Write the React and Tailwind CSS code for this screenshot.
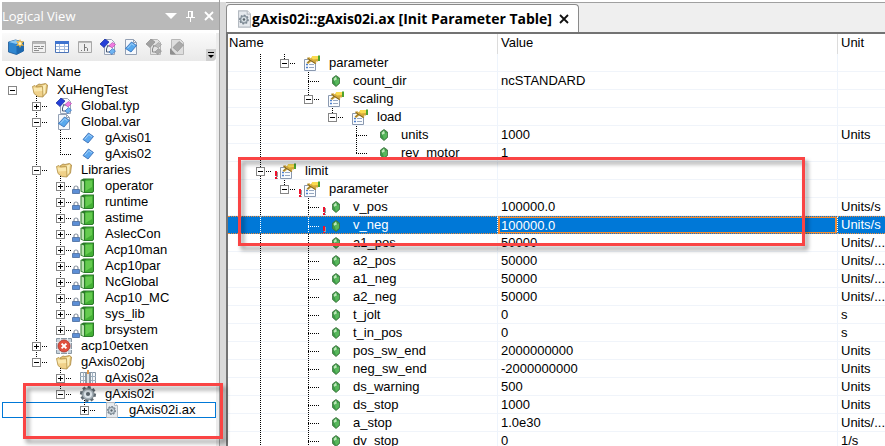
import React from "react";

const TREE_ROWS = [
  { depth: 0, name: "XuHengTest", icon: "folder", open: true },
  { depth: 1, name: "Global.typ", icon: "types", open: false },
  { depth: 1, name: "Global.var", icon: "vars", open: true },
  { depth: 2, name: "gAxis01", icon: "tag" },
  { depth: 2, name: "gAxis02", icon: "tag" },
  { depth: 1, name: "Libraries", icon: "folder", open: true },
  { depth: 2, name: "operator", icon: "book", open: false, badge: "lock" },
  { depth: 2, name: "runtime", icon: "book", open: false, badge: "lock" },
  { depth: 2, name: "astime", icon: "book", open: false, badge: "lock" },
  { depth: 2, name: "AslecCon", icon: "book", open: false, badge: "lock" },
  { depth: 2, name: "Acp10man", icon: "book", open: false, badge: "lock" },
  { depth: 2, name: "Acp10par", icon: "book", open: false, badge: "lock" },
  { depth: 2, name: "NcGlobal", icon: "book", open: false, badge: "lock" },
  { depth: 2, name: "Acp10_MC", icon: "book", open: false, badge: "lock" },
  { depth: 2, name: "sys_lib", icon: "book", open: false, badge: "lock" },
  { depth: 2, name: "brsystem", icon: "book", open: false, badge: "lock" },
  { depth: 1, name: "acp10etxen", icon: "error", open: false },
  { depth: 1, name: "gAxis02obj", icon: "folder", open: true },
  { depth: 2, name: "gAxis02a", icon: "axis", open: false },
  { depth: 2, name: "gAxis02i", icon: "gear", open: true },
  { depth: 3, name: "gAxis02i.ax", icon: "gearPage", open: false, selected: true },
];

const PARAM_ROWS = [
  { depth: 1, name: "parameter", icon: "props", open: true },
  { depth: 2, name: "count_dir", icon: "gem", value: "ncSTANDARD" },
  { depth: 2, name: "scaling", icon: "props", open: true },
  { depth: 3, name: "load", icon: "props", open: true },
  { depth: 4, name: "units", icon: "gem", value: "1000", unit: "Units" },
  { depth: 4, name: "rev_motor", icon: "gem", value: "1" },
  { depth: 0, name: "limit", icon: "props", open: true, badge: "alert" },
  { depth: 1, name: "parameter", icon: "props", open: true, badge: "alert" },
  { depth: 2, name: "v_pos", icon: "gem", value: "100000.0", unit: "Units/s", badge: "alert" },
  { depth: 2, name: "v_neg", icon: "gem", value: "100000.0", unit: "Units/s", badge: "alert", selected: true },
  { depth: 2, name: "a1_pos", icon: "gem", value: "50000", unit: "Units/..." },
  { depth: 2, name: "a2_pos", icon: "gem", value: "50000", unit: "Units/..." },
  { depth: 2, name: "a1_neg", icon: "gem", value: "50000", unit: "Units/..." },
  { depth: 2, name: "a2_neg", icon: "gem", value: "50000", unit: "Units/..." },
  { depth: 2, name: "t_jolt", icon: "gem", value: "0", unit: "s" },
  { depth: 2, name: "t_in_pos", icon: "gem", value: "0", unit: "s" },
  { depth: 2, name: "pos_sw_end", icon: "gem", value: "2000000000", unit: "Units" },
  { depth: 2, name: "neg_sw_end", icon: "gem", value: "-2000000000", unit: "Units" },
  { depth: 2, name: "ds_warning", icon: "gem", value: "500", unit: "Units" },
  { depth: 2, name: "ds_stop", icon: "gem", value: "1000", unit: "Units" },
  { depth: 2, name: "a_stop", icon: "gem", value: "1.0e30", unit: "Units/..." },
  { depth: 2, name: "dv_stop", icon: "gem", value: "0", unit: "1/s" },
];

// True when the branch line of `level` goes on below row `index`.
function continues(rows, index, level, tail) {
  for (let i = index + 1; i < rows.length; i++) {
    if (rows[i].depth < level) return false;
    if (rows[i].depth === level) return true;
  }
  return tail.includes(level);
}

function Gear({ cx, cy, r, dark = "#5f6971" }) {
  return (
    <g transform={`translate(${cx} ${cy})`}>
      {[0, 45, 90, 135].map((a) => (
        <rect key={a} x={-r} y={-r * 0.2} width={r * 2} height={r * 0.4} fill={dark} transform={`rotate(${a + 10})`} />
      ))}
      <circle r={r * 0.76} fill="#a3aeb6" stroke={dark} strokeWidth=".6" />
      <circle r={r * 0.5} fill="#dde5ea" />
      <circle r={r * 0.26} fill="#59636b" />
    </g>
  );
}

function Page() {
  return <path d="M2.5 .5h8l3 3v12h-11z M10.5 .5v3h3" fill="#f5f8fc" stroke="#93a0b4" />;
}

function TypeShapes({ gray }) {
  return (
    <g>
      <path d="M4.5 .5h7l3 3v12h-10z" fill={gray ? "#e4e4e4" : "#f5f8fc"} stroke={gray ? "#b5b5b5" : "#9aa5b8"} />
      <path d="M8 6l-1.5 4v3h4M8 7h4" fill="none" stroke={gray ? "#888" : "#4a5b77"} />
      <path d="M0 5l5-5 4 3-5 5.5z" fill={gray ? "#a2a2a2" : "#2540d8"} stroke={gray ? "#8e8e8e" : "#142a9c"} strokeWidth=".7" />
      <path d="M9 6.500l3.500-3 3 2-3.500 3.500z" fill={gray ? "#b9b9b9" : "#f07be0"} stroke={gray ? "#989898" : "#b140a8"} strokeWidth=".6" />
      <path d="M9 13l3.500-3.500 3 2.500-3.500 3.500z" fill={gray ? "#aaa" : "#6eb4f2"} stroke={gray ? "#8e8e8e" : "#2a62b4"} strokeWidth=".6" />
    </g>
  );
}

function Glyph({ name }) {
  switch (name) {
    case "folder":
      return (
        <g>
          <path d="M4 4l3-2 2 .500L13.500 1.500l2 1.500-1 8-4 4z" fill="#e3c274" stroke="#a98740" strokeWidth=".8" />
          <path d="M9 4l5-1.500-1 8.500-2.500 3z" fill="#fbeebb" />
          <path d="M.5 4.500l2.500-1 1.500 1.500 6-.5L11 15l-5-.5-4-3z" fill="#f0d189" stroke="#b08f45" strokeWidth=".8" />
          <path d="M1.500 5.500l2.500.5 6-.5.2 3.500-8 .5z" fill="#fae8ae" />
        </g>
      );
    case "types":
      return <TypeShapes />;
    case "vars":
      return (
        <g>
          <Page />
          <path d="M2.500 9.500l6-6.500 5 3.500-5.500 6.500z" fill="#58a9ee" stroke="#2c67b3" strokeWidth=".8" />
          <path d="M4.500 9.200l4.200-4.500 2.800 2" fill="none" stroke="#a8d5fa" />
        </g>
      );
    case "tag":
      return (
        <g>
          <path d="M3 9.500l5.500-6.500 5 3.500-5.500 6.500z" fill="#5da8f0" stroke="#3264ac" strokeWidth=".8" />
          <path d="M4.800 9.200l4-4.600 3 2" fill="none" stroke="#a8d5fa" />
        </g>
      );
    case "book":
      return (
        <g>
          <path d="M.5 2L3.500 .5H14V13.500L12.500 15H4L.5 13.500z" fill="#2c7a2a" />
          <path d="M1.500 2.500l2.500 1v10.700l-2.500-1.200z" fill="#bfe3b5" />
          <path d="M5 2.500l1.500-1H12L13 2v11l-1 1H5z" fill="#43b035" />
          <path d="M5.500 3L12 2.500V9L5.500 13z" fill="#66cb50" />
        </g>
      );
    case "error":
      return (
        <g>
          <path d="M.5 .5h15v15H.5z" fill="#c8d3dc" stroke="#8b98a4" />
          <path d="M0 4.500h16M0 11.500h16M4.500 0v16M11.500 0v16" stroke="#eef3f6" />
          <circle cx="8" cy="8" r="6" fill="#e0503f" stroke="#b03228" strokeWidth=".8" />
          <path d="M5.600 5.600l4.800 4.800M10.400 5.600l-4.800 4.800" stroke="#fff" strokeWidth="2" />
        </g>
      );
    case "axis":
      return (
        <g>
          <path d="M.5 2.500h15v12H.5z" fill="#f4f7fa" stroke="#8796a4" />
          <path d="M0 6.500h16M0 10.500h16M3.500 2v13M12.500 2v13" stroke="#9fb0bf" />
          <path d="M5 3h6v12H5z" fill="#8c99a4" />
          <path d="M7 1l2-1v15H7z" fill="#dfe4e8" />
          <path d="M7 0h2v4H7z" fill="#e09a4c" />
        </g>
      );
    case "gear":
      return <Gear cx={8} cy={8} r={8} />;
    case "gearPage":
      return (
        <g>
          <path d="M2.5 .5h8l3 3v12h-11z" fill="#e6eaee" stroke="#b4bac1" />
          <path d="M10.5 .5v3h3" fill="#fff" stroke="#b4bac1" />
          <Gear cx={7.5} cy={8.5} r={4.5} dark="#76828d" />
        </g>
      );
    case "props":
      return (
        <g>
          <path d="M.5 4.500h11v11H.5z" fill="#fafcfe" stroke="#8a99b0" />
          <path d="M2 9.500h2M2 12.500h2" stroke="#4b7fd0" strokeWidth="1.500" />
          <path d="M5 9.500h5M5 12.500h5" stroke="#98a9c2" />
          <path d="M3 3.500L5 2l2 1.500L8.500 1H14v5.500h-2.500l1 1.500-1.500 1-3.500-2.500L4 9 2.500 7.500l2.500-2z" fill="#d5a93a" />
          <path d="M3.500 3l3 2.500 5 3M3.500 8l3-3" fill="none" stroke="#76602a" />
          <path d="M8 1h6v3L9 4.500 7.500 3z" fill="#fadb50" />
          <path d="M14 .5h2V6h-2z" fill="#4fa32f" />
        </g>
      );
    case "gem":
      return (
        <g>
          <path d="M8 2.500l3.500 2.500v5.500L8 13.500l-3.500-3V5z" fill="#3c9a46" stroke="#3d6f3e" strokeWidth=".8" />
          <path d="M8 3.500L5.500 6l1 2L9 6.500z" fill="#bfe8b9" />
          <path d="M9 6.500l2-1v4.500L8 12.500l-1.500-4.500z" fill="#58b85c" />
        </g>
      );
    default:
      return null;
  }
}

function Badge({ name, height }) {
  const top = height - 9;
  if (name === "lock")
    return (
      <g transform={`translate(0 ${top})`}>
        <path d="M2 4.500V3a2 2 0 0 1 4 0V4.500" fill="none" stroke="#8a94a3" strokeWidth="1.200" />
        <path d="M.5 4.500h7v4h-7z" fill="#5d8fd6" stroke="#46699c" strokeWidth=".8" />
      </g>
    );
  if (name === "alert")
    return (
      <g transform={`translate(3 ${top})`} shapeRendering="crispEdges">
        <path d="M1 1h2v5H1zM1 7h2v2H1z" fill="#9b9b9b" />
        <path d="M0 0h2v5H0zM0 6h2v2H0z" fill="#f0102c" />
      </g>
    );
  return null;
}

function Guide({ height, through, up, down, stub, box, color, narrow }) {
  const m = Math.floor(height / 2);
  const w = narrow ? 22 : 24;
  const from = through || up ? 0 : m;
  const to = through || down ? height : m;
  return (
    <svg
      className="block shrink-0"
      width={w}
      height={height}
      viewBox={`${24 - w} 0 ${w} ${height}`}
      shapeRendering="crispEdges"
      aria-hidden="true"
    >
      {to > from && <path d={`M12.500 ${from}V${to}`} stroke={color} strokeDasharray="1 1" />}
      {stub && <path d={`M12 ${m + 0.5}H24`} stroke={color} strokeDasharray="1 1" />}
      {box && (
        <g>
          <rect x="8.500" y={m - 3.5} width="8" height="8" fill="#fff" stroke="#868686" />
          <path d={`M10 ${m + 0.5}h5`} stroke="#000" />
          {box === "plus" && <path d={`M12.500 ${m - 2}v5`} stroke="#000" />}
        </g>
      )}
    </svg>
  );
}

function Branch({ rows, index, height, tail = [], rootless, invert }) {
  const row = rows[index];
  const color = invert ? "#fff" : "#000";
  const hasBox = row.open !== undefined;
  const cells = [];
  for (let level = 0; level < row.depth; level++) {
    cells.push(
      <Guide
        key={level}
        height={height}
        color={color}
        narrow={rootless && level === 0}
        through={continues(rows, index, level, tail)}
      />
    );
  }
  const isRoot = rootless && row.depth === 0;
  const own = (
    <Guide
      height={height}
      color={color}
      narrow={isRoot}
      up={!isRoot}
      down={continues(rows, index, row.depth, tail)}
      stub={!isRoot}
      box={hasBox ? (row.open ? "minus" : "plus") : null}
    />
  );
  return (
    <>
      {cells}
      {hasBox ? (
        <button type="button" className="block shrink-0" aria-label={`${row.open ? "Collapse" : "Expand"} ${row.name}`}>
          {own}
        </button>
      ) : (
        own
      )}
      <svg className="block shrink-0" width="32" height={height} aria-hidden="true">
        {row.open && (
          <path d={`M12.500 ${height - 4}V${height}`} stroke={color} strokeDasharray="1 1" shapeRendering="crispEdges" />
        )}
        <g transform={`translate(8 ${(height - 16) / 2})`}>
          <Glyph name={row.icon} />
        </g>
        <Badge name={row.badge} height={height} />
      </svg>
    </>
  );
}

const TOOLS = [
  {
    label: "Add object",
    art: (
      <g>
        <path d="M.5 3l7-2 8 2v9l-7 3.500-8-2.500z" fill="#2f86d0" stroke="#1b5692" strokeWidth=".8" />
        <path d="M.5 3l8 2 7-2-8-2z" fill="#8cc8f2" />
        <path d="M8.500 5v10.500l7-3.500V3z" fill="#1d69b0" />
        <path d="M12 0l1 2.500 3-.5-2 2.500 2 2.500-3-.5-1 2.500-1-2.500-3 .5 2-2.500-2-2.500 3 .5z" fill="#f6b83d" />
        <circle cx="12" cy="4.500" r="1.500" fill="#fff5c4" />
      </g>
    ),
  },
  {
    label: "Text file",
    art: (
      <g>
        <path d="M1.500 2.500h13v11h-13z" fill="#f1f1f1" stroke="#a8a8a8" />
        <path d="M2 3h12v2H2z" fill="#b7b7b7" />
        <path d="M3 7.500h6M10 7.500h3M3 9.500h3M7 9.500h5M3 11.500h5" stroke="#8c8c8c" />
      </g>
    ),
  },
  {
    label: "Table",
    art: (
      <g>
        <path d="M1.500 2.500h13v11h-13z" fill="#fff" stroke="#4b74b8" />
        <path d="M1 2h14v3H1z" fill="#3f74cf" />
        <path d="M2 7.500h12M2 10.500h12M5.500 5v8M10.500 5v8" stroke="#a4bcdf" />
      </g>
    ),
  },
  {
    label: "Header file",
    art: (
      <g>
        <path d="M1.500 2.500h13v11h-13z" fill="#eee" stroke="#a8a8a8" />
        <path d="M2 3h12v1H2z" fill="#bbb" />
        <path d="M4 11.500h1M7.500 5v7M7.500 8.500h2l1 1V12" fill="none" stroke="#777" />
      </g>
    ),
  },
  { label: "Data types", art: <TypeShapes /> },
  { label: "Variables", art: <Glyph name="vars" /> },
  { label: "Inherited types", art: <TypeShapes gray /> },
  {
    label: "Inherited variables",
    art: (
      <g>
        <path d="M2.500 .5h9l3 3v12h-12z" fill="#dedede" stroke="#b8b8b8" />
        <path d="M4 8.500l6-6 4.500 3.500-6 6.500z" fill="#aaa" stroke="#929292" strokeWidth=".7" />
        <path d="M1 9l6 6.500H1z" fill="#8f8f8f" />
      </g>
    ),
  },
];

function LogicalView() {
  return (
    <aside className="flex w-[220px] shrink-0 flex-col border-r border-[#a0a0a0] bg-white pt-[2px]">
      <div className="ml-[2px] flex h-7 items-center bg-[#b9b9b9] text-white">
        <h1 className="flex-1 font-['Open_Sans','Noto_Sans',sans-serif] text-[13px] leading-none">Logical View</h1>
        <button type="button" aria-label="Window position" className="flex h-5 w-5 items-center justify-center">
          <svg width="12" height="6">
            <path d="M0 0h12L6 6z" fill="#fff" />
          </svg>
        </button>
        <button type="button" aria-label="Auto hide" className="flex h-5 w-[18px] items-center justify-center">
          <svg width="9" height="11" shapeRendering="crispEdges">
            <path d="M2.500 6V.5h4V6M0 6.500h9M4.500 7v4M5.500 1v5" fill="none" stroke="#fff" />
          </svg>
        </button>
        <button type="button" aria-label="Close panel" className="flex h-5 w-5 items-center justify-center">
          <svg width="10" height="10">
            <path d="M1 1l8 8M9 1L1 9" stroke="#fff" strokeWidth="1.800" />
          </svg>
        </button>
      </div>
      <div className="mt-[3px] flex flex-1 flex-col border-r-[3px] border-[#ececec] pl-[2px]">
        <div className="flex h-[28px] items-center rounded-r bg-linear-to-b from-[#fbfbfb] to-[#e9e9e9] pl-[6px]">
          <div className="flex flex-1 gap-[7px]">
            {TOOLS.map((t) => (
              <button type="button" key={t.label} aria-label={t.label}>
                <svg className="block" width="16" height="16">
                  {t.art}
                </svg>
              </button>
            ))}
          </div>
          <button
            type="button"
            aria-label="Toolbar options"
            className="flex h-3 w-[10px] items-center justify-center self-end rounded-br bg-[#cfcfcf]"
          >
            <svg width="6" height="7">
              <path d="M0 .5h6" stroke="#000" />
              <path d="M0 3h6L3 6z" fill="#000" />
            </svg>
          </button>
        </div>
        <h2 className="h-[21px] pl-[3px] text-[13px] leading-[21px]">Object Name</h2>
        <ul role="tree" aria-label="Logical View">
          {TREE_ROWS.map((row, i) => (
            <li
              key={row.name}
              role="treeitem"
              aria-selected={!!row.selected}
              aria-level={row.depth + 1}
              className={`flex h-4 ${row.selected ? "inset-ring inset-ring-[#0078d7]" : ""}`}
            >
              <Branch rows={TREE_ROWS} index={i} height={16} rootless />
              <span className="pl-px text-[13px] leading-4">{row.name}</span>
            </li>
          ))}
        </ul>
      </div>
    </aside>
  );
}

function ParameterTable() {
  return (
    <table className="w-full table-fixed border-separate border-spacing-0 text-left text-[13px] leading-[17px]">
      <colgroup>
        <col className="w-[270px]" />
        <col />
        <col className="w-[47px]" />
      </colgroup>
      <thead>
        <tr className="h-5 align-top">
          <th className="border-r border-[#dcdcdc] p-0 pl-px font-normal">Name</th>
          <th className="border-r border-[#dcdcdc] p-0 pl-[3px] font-normal">Value</th>
          <th className="p-0 pl-[3px] font-normal">Unit</th>
        </tr>
      </thead>
      <tbody>
        {PARAM_ROWS.map((row, i) => {
          const edge = row.selected
            ? "border-y border-dotted border-y-[#f08a35] bg-[#0078d7] leading-4 text-white"
            : "border-b border-b-[#f0f4fa]";
          const side = row.selected ? "border-r border-r-white" : "border-r border-r-[#eef4fc]";
          return (
            <tr key={row.name + i} className="h-[18px]">
              <td className={`p-0 ${edge} ${side}`}>
                <div className={`flex overflow-hidden pl-5 ${row.selected ? "h-4" : "h-[17px]"}`}>
                  <Branch rows={PARAM_ROWS} index={i} height={18} tail={[0, 2]} invert={row.selected} />
                  <span className="pl-px">{row.name}</span>
                </div>
              </td>
              <td className={`p-0 ${edge} ${side}`}>
                {row.selected ? (
                  <input
                    aria-label={`${row.name} value`}
                    defaultValue={row.value}
                    className="block h-4 w-full border border-x-2 border-[#f08a35] bg-transparent pl-px leading-[14px] outline-none"
                  />
                ) : (
                  <span className="block h-[17px] pl-[3px]">{row.value}</span>
                )}
              </td>
              <td className={`p-0 pl-[3px] whitespace-nowrap ${edge}`}>{row.unit}</td>
            </tr>
          );
        })}
      </tbody>
    </table>
  );
}

function Editor() {
  return (
    <main className="mt-[2px] flex min-w-0 flex-1 flex-col border-t border-[#a0a0a0]">
      <div className="flex h-[29px] items-end bg-[#efefef]">
        <div className="flex h-[28px] w-[353px] items-center rounded-t border border-b-0 border-[#8a8a8a] bg-white pr-[6px] pl-[11px]">
          <svg className="mr-px shrink-0" width="13" height="18" viewBox="2 0 12 16">
            <Glyph name="gearPage" />
          </svg>
          <span className="flex-1 font-['Open_Sans','Noto_Sans',sans-serif] text-[14px] leading-none font-bold whitespace-nowrap">
            gAxis02i::gAxis02i.ax [Init Parameter Table]
          </span>
          <button type="button" aria-label="Close tab" className="flex h-4 w-4 shrink-0 items-center justify-center">
            <svg width="10" height="10">
              <path d="M1 1l8 8M9 1L1 9" stroke="#111" strokeWidth="1.800" />
            </svg>
          </button>
        </div>
      </div>
      <div className="min-h-0 flex-1 overflow-hidden border-t-2 border-l-2 border-[#737373] bg-white">
        <ParameterTable />
      </div>
    </main>
  );
}

export default function App() {
  return (
    <div className="relative flex h-screen overflow-hidden bg-white font-['Liberation_Sans',Arial,sans-serif] text-[13px] text-black">
      <LogicalView />
      <div className="mt-[2px] w-[6px] shrink-0 bg-[#dadada]" />
      <Editor />
      <div className="pointer-events-none absolute top-[157px] left-[238px] h-[89px] w-[567px] border-3 border-[#fa4444] drop-shadow-[3px_4px_2px_rgba(0,0,0,0.4)]" />
      <div className="pointer-events-none absolute top-[383px] left-[23px] h-[56px] w-[200px] border-3 border-[#fa4444] drop-shadow-[3px_4px_2px_rgba(0,0,0,0.4)]" />
    </div>
  );
}
